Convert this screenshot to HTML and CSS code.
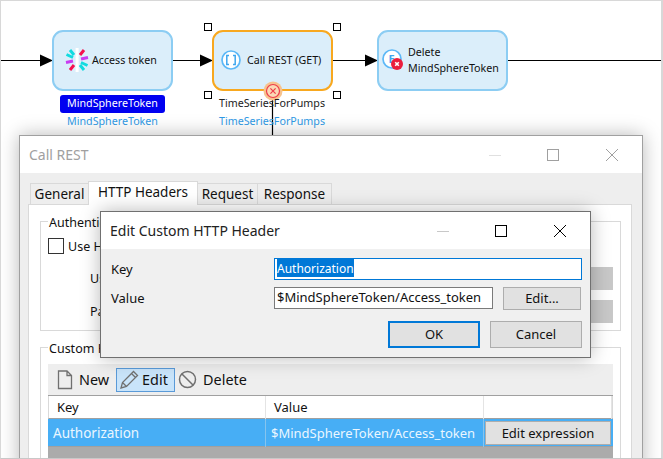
FILE: index.html
```html
<!DOCTYPE html>
<html lang="en">
  <head>
    <meta charset="UTF-8" />
    <meta name="viewport" content="width=device-width, initial-scale=1.0" />
    <title>Call REST</title>
    <link rel="stylesheet" href="styles.css">
  </head>
  <body>
    <div class="canvas">
      <!-- flow lines -->
      <svg class="wires" width="663" height="459" viewBox="0 0 663 459">
        <path d="M0 60.5H42M172 60.5H202M333 60.5H367M507 60.5H663M272.5 100V136" stroke="#000" stroke-width="1.2" fill="none" />
        <path d="M40 54.5L53 60.5L40 66.5ZM200 54.5L213 60.5L200 66.5ZM365 54.5L378 60.5L365 66.5Z" fill="#000" />
      </svg>

      <div class="node node-token">
        <svg class="node-icon" width="28" height="28" viewBox="0 0 28 28">
          <rect x="12.6" y="2" width="3" height="24" fill="#fff" />
          <path d="M7 4L11 9M3.5 8.5L10 11.5M24.5 19.5L18 16.5M21 24L17 19" stroke="#12dbe0" stroke-width="3" />
          <path d="M21 4L17 9M7 24L11 19" stroke="#f5124f" stroke-width="3" />
          <path d="M3 16.5L10 15M25 11.5L18 13" stroke="#c93cf2" stroke-width="3" />
        </svg>
        <span>Access token</span>
      </div>

      <div class="node node-rest">
        <svg class="node-icon" width="22" height="22" viewBox="0 0 22 22">
          <circle cx="11" cy="11" r="9" fill="#fff" stroke="#5cb8f7" stroke-width="1.7" />
          <path d="M9 6.5H6.8V15.5H9M13 6.5H15.2V15.5H13" fill="none" stroke="#3fa6ee" stroke-width="1.5" />
        </svg>
        <span>Call REST (GET)</span>
      </div>

      <div class="node node-delete">
        <svg class="node-icon" width="26" height="26" viewBox="0 0 26 26">
          <circle cx="11" cy="11" r="9" fill="#fff" stroke="#5cb8f7" stroke-width="1.7" />
          <text x="7.5" y="15" class="icon-letter">E</text>
          <circle cx="16" cy="16" r="6" fill="#ea1f3d" />
          <path d="M14.2 14.2L17.8 17.8M17.8 14.2L14.2 17.8" stroke="#fff" stroke-width="1.6" />
        </svg>
        <span>Delete<br />MindSphereToken</span>
      </div>

      <span class="handle h-tl"></span>
      <span class="handle h-tr"></span>
      <span class="handle h-bl"></span>
      <span class="handle h-br"></span>

      <svg class="error-badge" width="20" height="20" viewBox="0 0 20 20">
        <circle cx="10" cy="10" r="9.5" fill="#f7c38f" />
        <circle cx="10" cy="10" r="6.5" fill="#fbd9b5" stroke="#ee3b4a" stroke-width="1.2" />
        <path d="M7.4 7.4L12.6 12.6M12.6 7.4L7.4 12.6" stroke="#ee3b4a" stroke-width="1.2" />
      </svg>

      <div class="var-label var-token">
        <span class="var-selected">MindSphereToken</span>
        <span class="var-link">MindSphereToken</span>
      </div>
      <div class="var-label var-series">
        <span class="var-plain">TimeSeriesForPumps</span>
        <span class="var-link">TimeSeriesForPumps</span>
      </div>
    </div>

    <div class="window window-rest">
      <div class="titlebar titlebar-off">
        <span class="title">Call REST</span>
        <div class="controls">
          <span class="control"><svg width="14" height="14" viewBox="0 0 14 14"><path d="M1 7.5H13" stroke="#e0e0e0" /></svg></span>
          <span class="control"><svg width="14" height="14" viewBox="0 0 14 14"><rect x="1.5" y="1.5" width="11" height="11" fill="none" stroke="#a0a0a0" /></svg></span>
          <span class="control"><svg width="14" height="14" viewBox="0 0 14 14"><path d="M1 1L13 13M13 1L1 13" stroke="#a0a0a0" /></svg></span>
        </div>
      </div>
      <div class="window-body">
        <div class="tabs">
          <span class="tab">General</span>
          <span class="tab tab-active">HTTP Headers</span>
          <span class="tab">Request</span>
          <span class="tab">Response</span>
        </div>
        <div class="pane">
          <!-- the rest of these labels sits under the dialog -->
          <div class="group group-auth">
            <span class="group-title">Authentic</span>
            <div class="check-row"><span class="checkbox"></span>Use H</div>
            <div class="field-row"><span>Us</span><span class="disabled-field"></span></div>
            <div class="field-row"><span>Pa</span><span class="disabled-field"></span></div>
          </div>
          <div class="group group-custom">
            <span class="group-title">Custom H</span>
            <div class="toolbar">
              <span class="tool tool-new">
                <svg width="16" height="20" viewBox="0 0 16 20"><path d="M1.5 1H10L14.5 5.5V18.5H1.5ZM10 1V5.5H14.5" fill="none" stroke="#707070" stroke-width="1.3" /></svg>
                New
              </span>
              <span class="tool tool-on">
                <svg width="20" height="20" viewBox="0 0 20 20"><path d="M2 18L3.5 12.5L14.5 1.5L18.5 5.5L7.5 16.5ZM3.5 12.5L7.5 16.5M12.5 3.5L16.5 7.5" fill="none" stroke="#707070" stroke-width="1.3" /></svg>
                Edit
              </span>
              <span class="tool">
                <svg width="19" height="19" viewBox="0 0 19 19"><circle cx="9.5" cy="9.5" r="8" fill="none" stroke="#707070" stroke-width="1.5" /><path d="M4 4L15 15" stroke="#707070" stroke-width="1.5" /></svg>
                Delete
              </span>
            </div>
            <div class="grid-row grid-head">
              <span class="cell">Key</span>
              <span class="cell">Value</span>
              <span class="cell"></span>
            </div>
            <div class="grid-row grid-selected">
              <span class="cell cell-key">Authorization</span>
              <span class="cell">$MindSphereToken/Access_token</span>
              <span class="cell cell-btn"><span class="expr-btn">Edit expression</span></span>
            </div>
            <div class="grid-empty"></div>
          </div>
        </div>
      </div>
    </div>

    <div class="window window-edit">
      <div class="titlebar">
        <span class="title">Edit Custom HTTP Header</span>
        <div class="controls">
          <span class="control"><svg width="14" height="14" viewBox="0 0 14 14"><path d="M1 7.5H13" stroke="#c8c8c8" /></svg></span>
          <span class="control"><svg width="14" height="14" viewBox="0 0 14 14"><rect x="1.5" y="1.5" width="11" height="11" fill="none" stroke="#000" /></svg></span>
          <span class="control"><svg width="14" height="14" viewBox="0 0 14 14"><path d="M1 1L13 13M13 1L1 13" stroke="#000" /></svg></span>
        </div>
      </div>
      <div class="form">
        <span class="form-label">Key</span>
        <div class="input input-focus"><span class="selected-text">Authorization</span></div>
        <span class="form-label">Value</span>
        <div class="value-row">
          <div class="input input-value">$MindSphereToken/Access_token</div>
          <span class="btn btn-edit">Edit...</span>
        </div>
      </div>
      <div class="actions">
        <span class="btn btn-action btn-default">OK</span>
        <span class="btn btn-action">Cancel</span>
      </div>
    </div>
  </body>
</html>
```

FILE: styles.css
```css
html,
body {
  margin: 0;
  padding: 0;
}
body {
  width: 663px;
  height: 459px;
  box-sizing: border-box;
  position: relative;
  overflow: hidden;
  background: #fff;
  border-top: 1px solid #d8d8d8;
  border-left: 1px solid #d8d8d8;
  border-right: 2px solid #d8d8d8;
  border-bottom: 1px solid #c8c8c8;
  font-family: "Noto Sans", "Open Sans", sans-serif;
  color: #111;
}

/* diagram */
.canvas {
  position: absolute;
  left: -1px;
  top: -1px;
  width: 663px;
  height: 459px;
  font-size: 10.7px;
}
.wires {
  position: absolute;
  left: 0;
  top: 0;
}
.node {
  position: absolute;
  top: 30px;
  height: 61px;
  box-sizing: border-box;
  display: flex;
  align-items: center;
  padding-bottom: 1px;
  background: #dbeefa;
  border: 2px solid #8ccdf3;
  border-radius: 11px;
  line-height: 16px;
}
.node-token {
  left: 52px;
  width: 121px;
  padding-left: 9px;
  gap: 1px;
}
.node-rest {
  left: 212px;
  width: 121px;
  padding-left: 6px;
  gap: 5px;
  border-color: #f8a81f;
}
.node-delete {
  left: 377px;
  width: 131px;
  padding-left: 2px;
  gap: 1px;
}
.node-delete .node-icon {
  margin-top: 2px;
}
.icon-letter {
  font-size: 11px;
  font-weight: 700;
  fill: #3fa6ee;
}
.handle {
  position: absolute;
  width: 6px;
  height: 6px;
  background: #fff;
  border: 1px solid #000;
}
.h-tl { left: 204px; top: 23px; }
.h-tr { left: 333px; top: 23px; }
.h-bl { left: 204px; top: 91px; }
.h-br { left: 333px; top: 91px; }
.error-badge {
  position: absolute;
  left: 263px;
  top: 81px;
}
.var-label {
  position: absolute;
  top: 95px;
  display: flex;
  flex-direction: column;
  align-items: center;
  line-height: 17px;
}
.var-token {
  left: 60px;
  width: 105px;
}
.var-series {
  left: 212px;
  width: 120px;
}
.var-selected {
  width: 100%;
  text-align: center;
  background: #0000f0;
  color: #fff;
  border-radius: 3px;
  height: 18px;
}
.var-plain {
  height: 18px;
  color: #222;
}
.var-link {
  color: #2f9ae6;
}

/* windows */
.window {
  position: absolute;
  box-sizing: border-box;
  background: #fff;
  box-shadow: 0 0 18px rgba(0, 0, 0, 0.28);
}
.window-rest {
  left: 18px;
  top: 134px;
  width: 624px;
  height: 340px;
  border: 1px solid #a0a0a0;
}
.window-edit {
  left: 99px;
  top: 210px;
  width: 491px;
  height: 147px;
  border: 1px solid #707070;
  background: #f0f0f0;
}
.titlebar {
  height: 37px;
  background: #fff;
  display: flex;
  align-items: center;
  justify-content: space-between;
  padding: 0 1px 0 9px;
}
.title {
  font-size: 14px;
  color: #222;
}
.titlebar-off .title {
  color: #a0a0a0;
}
.controls {
  display: flex;
}
.control {
  width: 58.5px;
  display: flex;
  justify-content: center;
}
.window-body {
  background: #eee;
  height: 302px;
  padding: 7px 10px 0 8px;
  box-sizing: border-box;
}

/* tabs */
.tabs {
  display: grid;
  grid-template-columns: 58px 109px 60px 74px;
  height: 24px;
  padding-left: 2px;
  font-size: 13.5px;
}
.tab {
  align-self: end;
  height: 21px;
  box-sizing: border-box;
  text-align: center;
  line-height: 20px;
  border: 1px solid #d9d9d9;
  border-bottom: 0;
  background: #eee;
  margin-right: -1px;
}
.tab-active {
  height: 24px;
  background: #fff;
  position: relative;
  margin-bottom: -1px;
  line-height: 21px;
}
.pane {
  height: 260px;
  box-sizing: border-box;
  background: #fff;
  border: 1px solid #d9d9d9;
  padding: 16px 10px 0 11px;
  font-size: 12.5px;
}

/* group boxes */
.group {
  position: relative;
  border: 1px solid #d9d9d9;
  box-sizing: border-box;
}
.group-title {
  position: absolute;
  left: 7px;
  top: -8px;
  background: #fff;
  padding: 0 1px;
  line-height: 18px;
}
.group-auth {
  height: 110px;
  margin-bottom: 16px;
  padding: 14px 7px 0 7px;
}
.check-row {
  display: flex;
  align-items: center;
  gap: 4px;
  height: 20px;
}
.checkbox {
  width: 14px;
  height: 14px;
  border: 1px solid #333;
  background: #fff;
}
.field-row {
  display: flex;
  justify-content: space-between;
  align-items: center;
  padding-left: 42px;
  height: 23px;
  margin-top: 10px;
}
.check-row + .field-row {
  margin-top: 11px;
}
.disabled-field {
  width: 200px;
  height: 23px;
  background: #c8c8c8;
}
.group-custom {
  height: 120px;
  padding: 16px 7px 0 7px;
}
.toolbar {
  height: 32px;
  background: #eee;
  box-sizing: border-box;
  border-bottom: 1px solid #a0a0a0;
  display: flex;
  align-items: center;
  gap: 3px;
  padding-left: 9px;
  font-size: 14.4px;
}
.tool {
  display: flex;
  align-items: center;
  gap: 6px;
  height: 24px;
  box-sizing: border-box;
}
.tool-new {
  margin-right: 4px;
}
.tool-on {
  width: 59px;
  gap: 3px;
  background: #c9e4fa;
  border: 1px solid #5a9ad8;
  padding-left: 2px;
}

/* header table */
.grid-row {
  display: grid;
  font-size: 13px;
}
.grid-head {
  grid-template-columns: 217px 218px 1fr;
  height: 23px;
  background: #fff;
  border: 1px solid #d9d9d9;
  border-top: 0;
  border-bottom: 1px solid #a0a0a0;
  box-sizing: border-box;
  line-height: 23px;
}
.grid-head .cell {
  padding-left: 8px;
  border-right: 1px solid #e4e4e4;
}
.grid-selected {
  grid-template-columns: 218px 218px 1fr;
  height: 27px;
  background: #47aef5;
  color: #eaf6ff;
  line-height: 28px;
}
.grid-selected .cell {
  padding-left: 5px;
  border-right: 1px solid #86c4ee;
}
.grid-selected .cell-key {
  font-size: 13.5px;
}
.grid-selected .cell-btn {
  padding: 2px 2px 1px 1px;
  border-right: 0;
}
.expr-btn {
  display: block;
  height: 24px;
  line-height: 22px;
  text-align: center;
  background: #e1e1e1;
  border: 1px solid #adadad;
  box-sizing: border-box;
  color: #111;
}
.grid-empty {
  height: 30px;
  background: #ababab;
  border-top: 1px solid #a0a0a0;
}

/* edit dialog */
.form {
  display: grid;
  grid-template-columns: 163px 308px;
  grid-auto-rows: 22px;
  row-gap: 7px;
  padding: 9px 0 0 10px;
  font-size: 13px;
  align-items: center;
}
.input {
  height: 22px;
  box-sizing: border-box;
  background: #fff;
  line-height: 19px;
  padding-left: 2px;
}
.input-focus {
  border: 1px solid #0078d7;
  font-size: 12px;
}
.selected-text {
  background: #0078d7;
  color: #fff;
  display: inline-block;
  height: 18px;
}
.value-row {
  display: flex;
  gap: 10px;
  height: 22px;
}
.input-value {
  width: 219px;
  border: 1px solid #7a7a7a;
}
.btn {
  box-sizing: border-box;
  background: #e1e1e1;
  border: 1px solid #adadad;
  text-align: center;
}
.btn-edit {
  width: 78px;
  height: 23px;
  line-height: 21px;
}
.actions {
  display: flex;
  justify-content: flex-end;
  gap: 10px;
  padding: 12px 8px 0 0;
  font-size: 13px;
}
.btn-action {
  width: 92px;
  height: 27px;
  line-height: 25px;
}
.btn-default {
  border: 2px solid #0078d7;
  line-height: 23px;
}
```
